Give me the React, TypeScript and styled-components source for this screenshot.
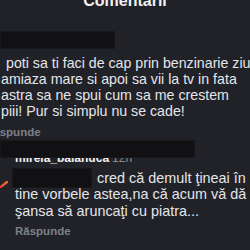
import React from "react";
import styled, { createGlobalStyle } from "styled-components";

const Global = createGlobalStyle`
  html, body { margin: 0; padding: 0; background: #212227; }
  body { width: 250px; height: 250px; overflow: hidden; font-family: "Liberation Sans", Arial, sans-serif; }
`;

const Screen = styled.div`
  width: 250px;
  height: 250px;
  overflow: hidden;
  background: #212227;
  color: #e4e6eb;
`;

const Title = styled.div`
  margin-top: -9px;
  height: 20px;
  line-height: 20px;
  font-size: 16px;
  font-weight: 700;
  text-align: center;
  color: #f2f2f4;
`;

const Redact = styled.div<{ $w: number; $h: number }>`
  width: ${(p) => p.$w}px;
  height: ${(p) => p.$h}px;
  background: #111113;
  box-shadow: inset 0 0 0 1px #18181b;
`;

const TopComment = styled.section`
  padding-top: 20px;
`;

const Body = styled.div<{ $lh: number; $size: number; $top: number }>`
  margin-top: ${(p) => p.$top}px;
  font-size: ${(p) => p.$size}px;
  line-height: ${(p) => p.$lh}px;
  color: #e4e6eb;
  white-space: nowrap;
`;

const Line = styled.div<{ $pad?: number }>`
  display: flex;
  align-items: center;
  padding-left: ${(p) => p.$pad ?? 0}px;
`;

const ReplyLink = styled.div<{ $shift: number; $top: number }>`
  margin-top: ${(p) => p.$top}px;
  margin-left: ${(p) => p.$shift}px;
  font-size: 11.5px;
  line-height: 14px;
  font-weight: 700;
  color: #7d8087;
`;

const ReplyComment = styled.section`
  position: relative;
  padding-top: 12px;
  display: grid;
  grid-template-columns: 15px 1fr;
`;

const NameBar = styled(Redact)`
  position: absolute;
  top: 1px;
  left: 0;
`;

const Gutter = styled.div`
  padding-top: 23px;
`;

const Content = styled.div`
  min-width: 0;
`;

const Author = styled.div`
  font-size: 12px;
  line-height: 14px;
  font-weight: 700;
  color: #f0f0f2;
  white-space: nowrap;
  span {
    font-weight: 400;
    color: #8a8d93;
    margin-left: 3px;
  }
`;

const Mention = styled(Redact)`
  flex: none;
  margin: -2px 5px -2px -3px;
`;

export default function App() {
  return (
    <Screen>
      <Global />
      <Title>Comentarii</Title>
      <TopComment>
        <Redact $w={115} $h={18} />
        <Body $lh={16} $size={14.2} $top={6}>
          <Line $pad={6}>poti sa ti faci de cap prin benzinarie ziua</Line>
          <Line $pad={1}>amiaza mare si apoi sa vii la tv in fata</Line>
          <Line $pad={1}>astra sa ne spui cum sa me crestem</Line>
          <Line $pad={1}>piii! Pur si simplu nu se cade!</Line>
        </Body>
        <ReplyLink $shift={-15} $top={6}>Răspunde</ReplyLink>
      </TopComment>
      <ReplyComment>
        <NameBar $w={195} $h={18} />
        <Gutter>
          <svg width="8" height="8" viewBox="0 0 8 8">
            <defs>
              <linearGradient id="g" x1="0" y1="1" x2="1" y2="0">
                <stop offset="0" stopColor="#e8452b" />
                <stop offset="1" stopColor="#f26a2e" />
              </linearGradient>
            </defs>
            <path d="M0 7.5 L7 2" stroke="url(#g)" strokeWidth="2.5" strokeLinecap="round" />
          </svg>
        </Gutter>
        <Content>
          <Author>
            mirela_balanuca<span>12h</span>
          </Author>
          <Body $lh={16.5} $size={14.4} $top={4.5}>
            <Line>
              <Mention $w={80} $h={20} />
              cred că demult ţineai în
            </Line>
            <Line>tine vorbele astea,na că acum vă dă</Line>
            <Line>şansa să aruncaţi cu piatra...</Line>
          </Body>
          <ReplyLink $shift={0} $top={5}>Răspunde</ReplyLink>
        </Content>
      </ReplyComment>
    </Screen>
  );
}
